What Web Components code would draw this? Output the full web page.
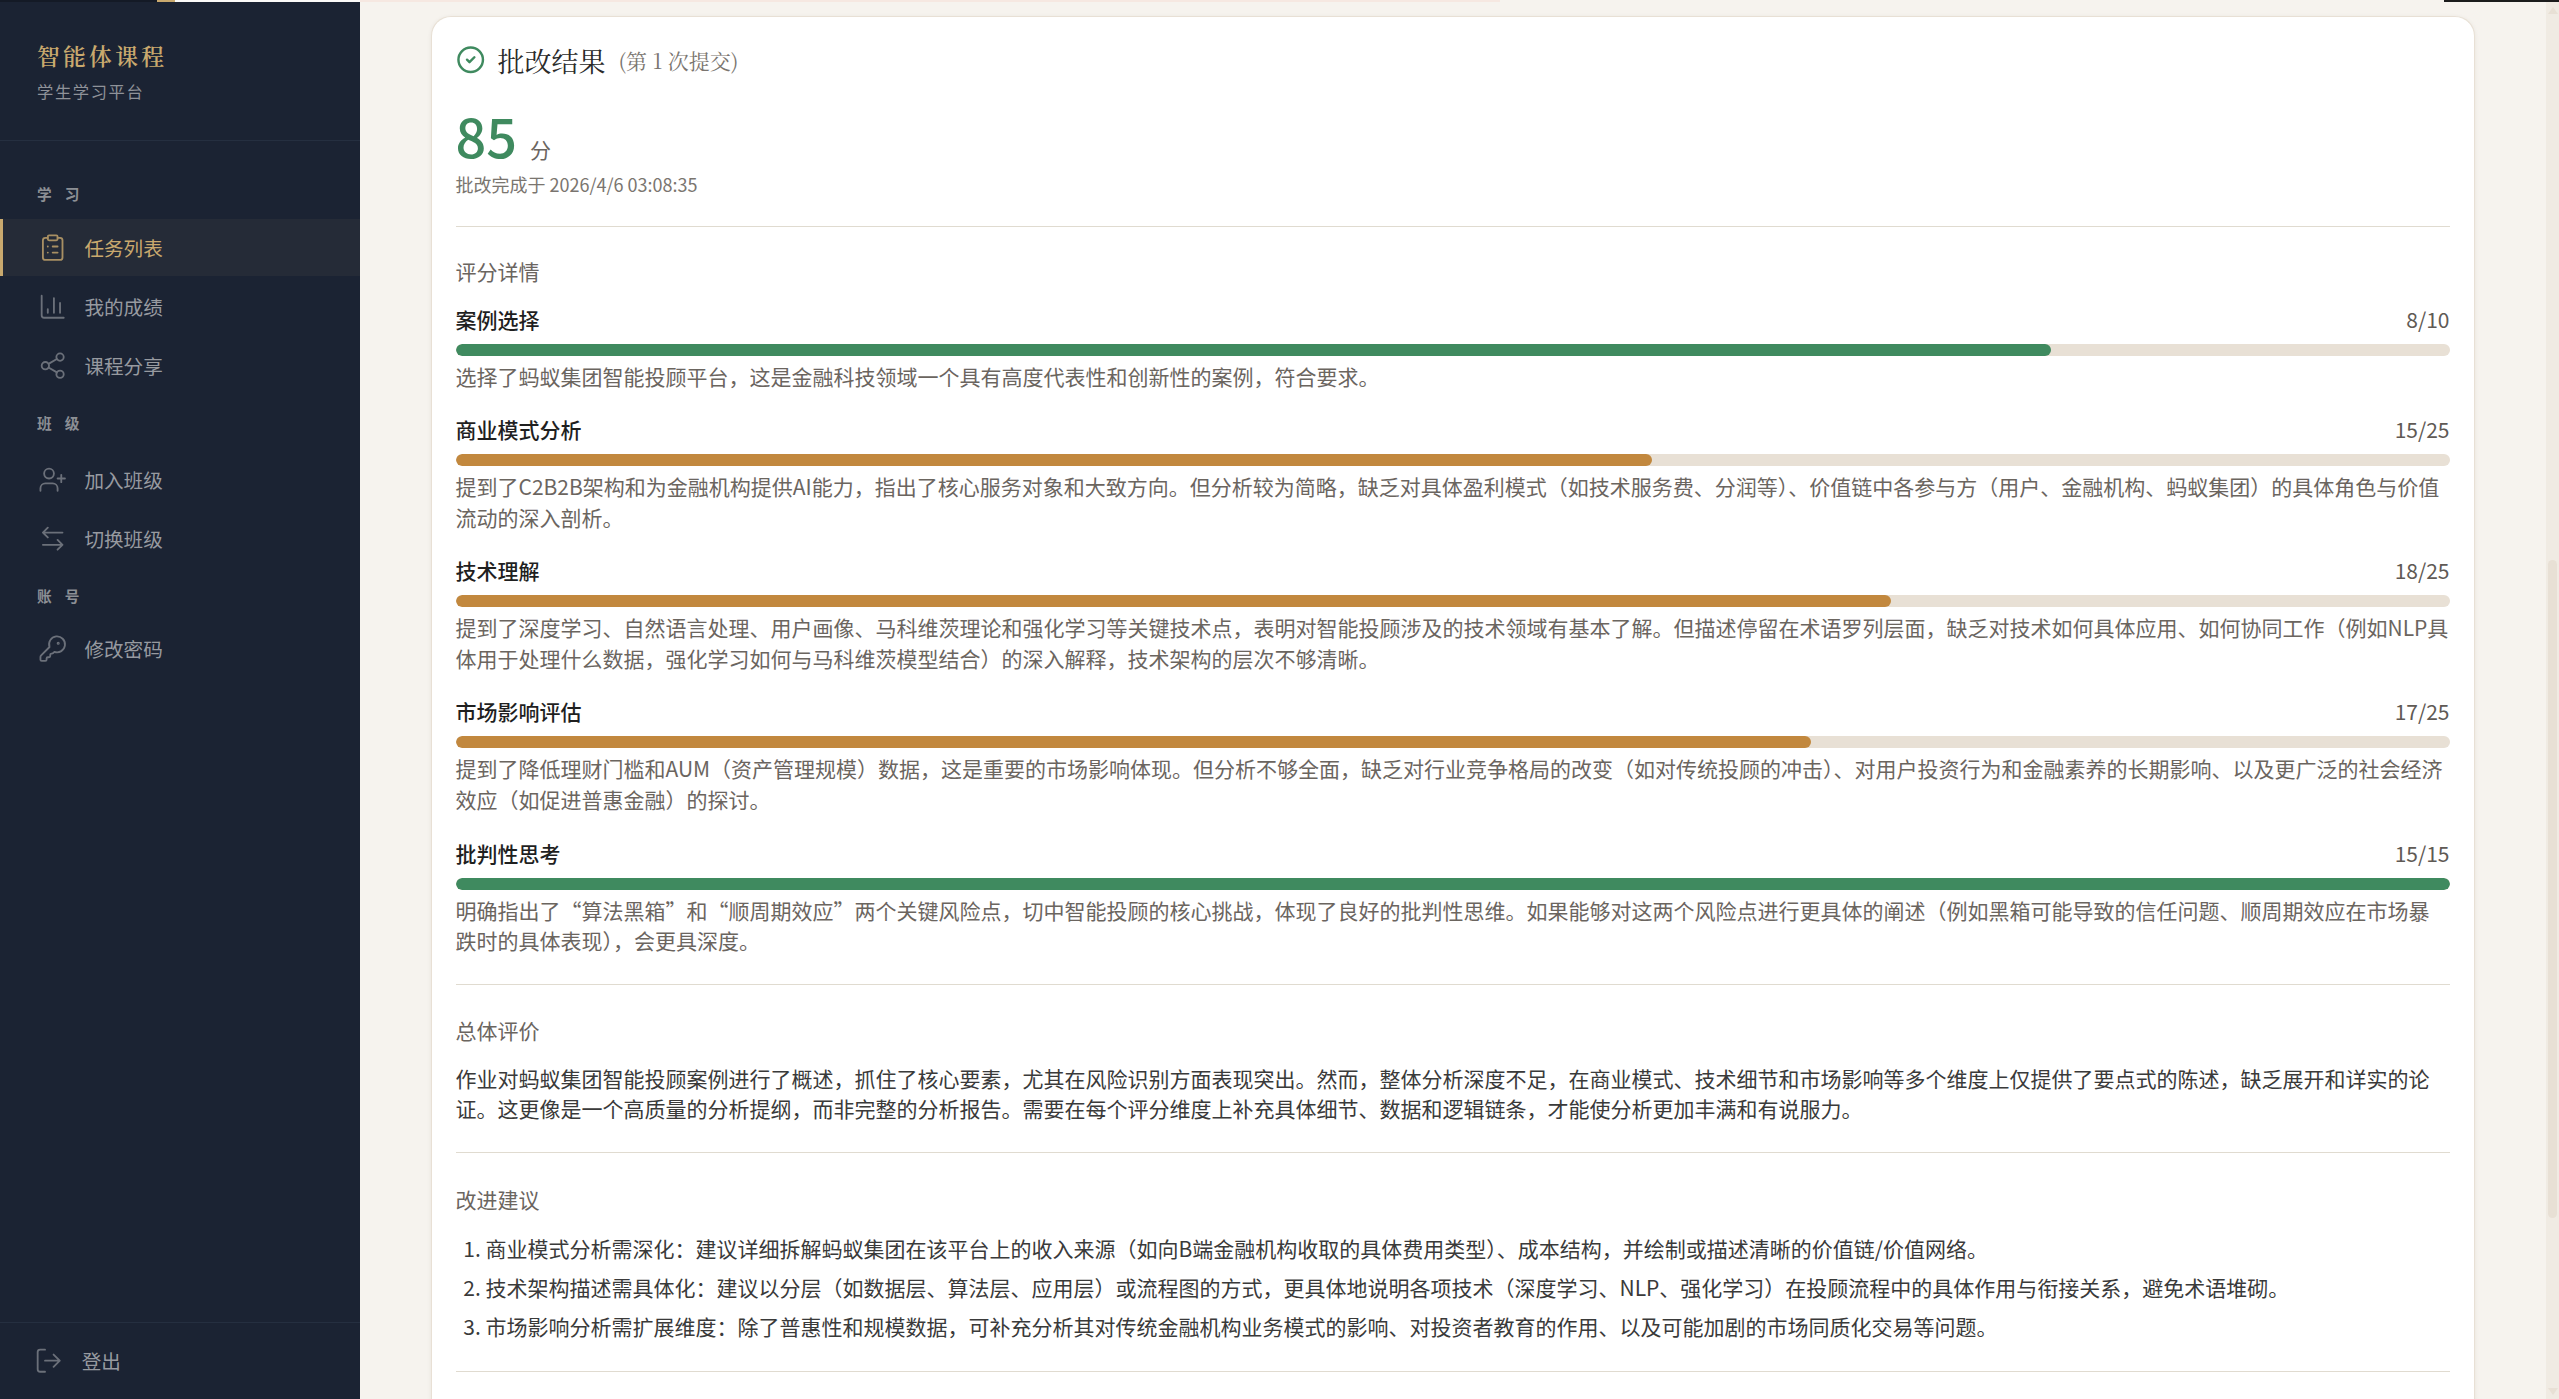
<!doctype html>
<html><head><meta charset="utf-8"><style>
html,body{margin:0;height:100%;overflow:hidden;background:#f6f3ee}
body{font-family:"Noto Sans CJK SC","Noto Sans",sans-serif}
</style></head><body>
<app-shell>
<side-bar slot="side"></side-bar>
<result-card slot="main"></result-card>
</app-shell>
<script>
const SANS='"Noto Sans CJK SC","Noto Sans",sans-serif';
const ICONS={
 task:'<rect x="8" y="2" width="8" height="4" rx="1"/><path d="M16 4h2a2 2 0 0 1 2 2v14a2 2 0 0 1-2 2H6a2 2 0 0 1-2-2V6a2 2 0 0 1 2-2h2"/><path d="M12 11h4M12 16h4M8 11h.01M8 16h.01"/>',
 chart:'<path d="M3 3v16a2 2 0 0 0 2 2h16"/><path d="M18 17V9M13 17V5M8 17v-3"/>',
 share:'<circle cx="18" cy="5" r="3"/><circle cx="6" cy="12" r="3"/><circle cx="18" cy="19" r="3"/><path d="M8.590 13.510l6.830 3.980M15.410 6.510l-6.820 3.980"/>',
 user:'<path d="M16 21v-2a4 4 0 0 0-4-4H6a4 4 0 0 0-4 4v2"/><circle cx="9" cy="7" r="4"/><path d="M19 8v6M22 11h-6"/>',
 swap:'<path d="M8 3L4 7l4 4M4 7h16M16 21l4-4-4-4M20 17H4"/>',
 key:'<path d="M2.586 17.414A2 2 0 0 0 2 18.828V21a1 1 0 0 0 1 1h3a1 1 0 0 0 1-1v-1a1 1 0 0 1 1-1h1a1 1 0 0 0 1-1v-1a1 1 0 0 1 1-1h.172a2 2 0 0 0 1.414-.586l.814-.814a6.500 6.500 0 1 0-4-4z"/><circle cx="16.500" cy="7.500" r=".5"/>',
 out:'<path d="M16 17l5-5-5-5M21 12H9M9 21H5a2 2 0 0 1-2-2V5a2 2 0 0 1 2-2h4"/>'
};
customElements.define('app-shell',class extends HTMLElement{constructor(){super();this.attachShadow({mode:'open'}).innerHTML=`<style>
:host{display:flex;flex-direction:column;height:1399px;width:2559px;overflow:hidden}
.strip{height:2px;flex:none;background:linear-gradient(90deg,#141a26 0 157px,#c9a96e 157px 175px,#fbfaf8 175px 360px,#f6e8e1 360px 1500px,#f6f3ee 1500px 2444px,#1c1c1c 2444px 2559px)}
.row{flex:1;display:flex;min-height:0}
.side{flex:none;width:360px;display:flex}
.main{flex:1;min-width:0;padding:14px 71.500px 0 70.500px;overflow:hidden;background:#f6f3ee}
.bar{flex:none;width:13px;background:#f0ebe3;display:flex;flex-direction:column;align-items:center;position:relative}
.up,.dn{width:0;height:0;border-left:5px solid transparent;border-right:5px solid transparent}
.up{border-bottom:7px solid #e8e0d5;margin-top:5px}
.dn{border-top:7px solid #e8e0d5;position:absolute;bottom:4px}
.th{width:9px;background:#e8e0d5;border-radius:5px;height:658px;margin-top:546px}
</style><div class="strip"></div><div class="row"><div class="side"><slot name="side"></slot></div><div class="main"><slot name="main"></slot></div><div class="bar"><div class="up"></div><div class="th"></div><div class="dn"></div></div></div>`}});
customElements.define('nav-ico',class extends HTMLElement{connectedCallback(){const n=this.getAttribute('name');this.attachShadow({mode:'open'}).innerHTML=`<style>:host{display:flex;flex:none;width:29.400px;height:29.400px}svg{width:100%;height:100%;fill:none;stroke:currentColor;stroke-width:1.500;stroke-linecap:round;stroke-linejoin:round}</style><svg viewBox="0 0 24 24">${ICONS[n]}</svg>`}});
customElements.define('nav-item',class extends HTMLElement{connectedCallback(){const a=this.hasAttribute('active');this.attachShadow({mode:'open'}).innerHTML=`<style>
:host{display:flex;align-items:center;height:57px;margin-bottom:2px;box-sizing:border-box;padding-left:37.500px;gap:17.500px;font:400 19.600px/1 ${SANS};color:#979aa0;${a?'background:#252b37;border-left:3px solid #c9a96e;padding-left:34.500px;color:#c9a96e;':''}}
nav-ico{opacity:${a?'.8':'.65'}}
</style><nav-ico name="${this.getAttribute('icon')}"></nav-ico><span><slot></slot></span>`}});
customElements.define('nav-label',class extends HTMLElement{connectedCallback(){this.attachShadow({mode:'open'}).innerHTML=`<style>
:host{display:block;padding:0 0 0 37px;height:20px;font:700 14.700px/20px ${SANS};color:#8c8f95;letter-spacing:4.900px;white-space:nowrap}
</style><slot></slot>`}});
customElements.define('side-bar',class extends HTMLElement{constructor(){super();this.attachShadow({mode:'open'}).innerHTML=`<style>
:host{display:flex;flex-direction:column;width:360px;height:100%;background:#1b2333;color:#8f9299}
header{height:139px;box-sizing:border-box;padding:39px 0 0 37px;border-bottom:1px solid #252f40}
h1{margin:0;font:600 22.800px/30px "Noto Serif CJK SC",serif;color:#c9a96e;letter-spacing:3.260px}
p{margin:9px 0 0;font:400 16.300px/22px ${SANS};letter-spacing:1.600px;color:#8f9299}
nav{flex:1;padding-top:43px}
footer{height:77.500px;border-top:1px solid #252f40;box-sizing:border-box;padding-left:34.300px;display:flex;align-items:center;gap:18px;font:400 19.600px/1 ${SANS};color:#979aa0}
footer nav-ico{opacity:.65}
.a{margin-bottom:15px}.b{margin:19px 0 18px}.c{margin:19px 0 14.500px}
</style><header><h1>智能体课程</h1><p>学生学习平台</p></header>
<nav><nav-label class="a">学 习</nav-label>
<nav-item active icon="task">任务列表</nav-item><nav-item icon="chart">我的成绩</nav-item><nav-item icon="share">课程分享</nav-item>
<nav-label class="b">班 级</nav-label>
<nav-item icon="user">加入班级</nav-item><nav-item icon="swap">切换班级</nav-item>
<nav-label class="c">账 号</nav-label>
<nav-item icon="key">修改密码</nav-item></nav>
<footer><nav-ico name="out"></nav-ico><span>登出</span></footer>`}});
customElements.define('score-item',class extends HTMLElement{connectedCallback(){const s=+this.getAttribute('s'),m=+this.getAttribute('m'),p=s/m*100;const c=p>=80?'#3f8a5f':'#c2883e';this.attachShadow({mode:'open'}).innerHTML=`<style>
:host{display:block;margin-bottom:23px}
.h{display:flex;justify-content:space-between;height:30px;line-height:30px;margin-bottom:10px;font-size:21px}
.n{font-weight:500;color:#1f1f1f}.v{color:#5f5a55}
.t{height:12px;border-radius:6px;background:#e8e0d5;overflow:hidden}
.f{height:100%;border-radius:6px;background:${c};width:${p}%}
.d{margin:5px 0 0;font-size:21px;line-height:30.600px;color:#6b655f}
</style><div class="h"><span class="n">${this.getAttribute('name')}</span><span class="v">${s}/${m}</span></div><div class="t"><div class="f"></div></div><p class="d"><slot></slot></p>`}});
customElements.define('result-card',class extends HTMLElement{constructor(){super();const items=[
['案例选择',8,10,'选择了蚂蚁集团智能投顾平台，这是金融科技领域一个具有高度代表性和创新性的案例，符合要求。'],
['商业模式分析',15,25,'提到了C2B2B架构和为金融机构提供AI能力，指出了核心服务对象和大致方向。但分析较为简略，缺乏对具体盈利模式（如技术服务费、分润等）、价值链中各参与方（用户、金融机构、蚂蚁集团）的具体角色与价值流动的深入剖析。'],
['技术理解',18,25,'提到了深度学习、自然语言处理、用户画像、马科维茨理论和强化学习等关键技术点，表明对智能投顾涉及的技术领域有基本了解。但描述停留在术语罗列层面，缺乏对技术如何具体应用、如何协同工作（例如NLP具体用于处理什么数据，强化学习如何与马科维茨模型结合）的深入解释，技术架构的层次不够清晰。'],
['市场影响评估',17,25,'提到了降低理财门槛和AUM（资产管理规模）数据，这是重要的市场影响体现。但分析不够全面，缺乏对行业竞争格局的改变（如对传统投顾的冲击）、对用户投资行为和金融素养的长期影响、以及更广泛的社会经济效应（如促进普惠金融）的探讨。'],
['批判性思考',15,15,'明确指出了“算法黑箱”和“顺周期效应”两个关键风险点，切中智能投顾的核心挑战，体现了良好的批判性思维。如果能够对这两个风险点进行更具体的阐述（例如黑箱可能导致的信任问题、顺周期效应在市场暴跌时的具体表现），会更具深度。']];
this.attachShadow({mode:'open'}).innerHTML=`<style>
:host{display:block;background:#fff;border:1px solid #e8e0d5;border-bottom:0;border-radius:20px 20px 0 0;box-shadow:0 1px 4px rgba(60,50,30,.08);padding:24px 24px 0 24px;height:1500px;box-sizing:border-box}
.tt{display:flex;align-items:center;height:38px;color:#2a2a2a}
.tt svg{width:29.400px;height:29.400px;fill:none;stroke:#3f8a5f;stroke-width:2;stroke-linecap:round;stroke-linejoin:round;margin-right:12.500px}
.tt b{font:400 27px/1 "Noto Serif CJK SC",serif;color:#2a2a2a}
.tt i{font:400 21px/1 "Noto Serif CJK SC",serif;color:#7a756f;margin-left:13px}
.sc{margin-top:26px;display:flex;align-items:baseline;height:60px;color:#3f8a5f;font-size:54px;font-weight:500;line-height:60px}
.sc u{text-decoration:none;font-size:21px;font-weight:400;color:#6b655f;margin-left:13px}
.tm{font-size:18px;color:#7a756f;line-height:30px;margin-top:4px}
hr{border:0;border-top:1px solid #e0dbd0;margin:0}
h3{margin:0;font:400 21px/30px ${SANS};color:#6b655f}
.ov{font-size:21px;line-height:30px;color:#3a3a3a;margin:18px 0 0}
ol{margin:15px 0 0;padding:0 0 0 30px;font-size:21px;line-height:39px;color:#3a3a3a}
</style>
<div class="tt"><svg viewBox="0 0 24 24"><circle cx="12" cy="12" r="10"/><path d="M9 12l2 2 4-4"/></svg><b>批改结果</b><i>(第 1 次提交)</i></div>
<div class="sc">85<u>分</u></div>
<div class="tm">批改完成于 2026/4/6 03:08:35</div>
<hr style="margin-top:27px">
<h3 style="margin-top:29px;margin-bottom:17.500px">评分详情</h3>
${items.map(i=>`<score-item name="${i[0]}" s="${i[1]}" m="${i[2]}">${i[3]}</score-item>`).join('')}
<hr style="margin-top:28px">
<h3 style="margin-top:30px">总体评价</h3>
<p class="ov">作业对蚂蚁集团智能投顾案例进行了概述，抓住了核心要素，尤其在风险识别方面表现突出。然而，整体分析深度不足，在商业模式、技术细节和市场影响等多个维度上仅提供了要点式的陈述，缺乏展开和详实的论证。这更像是一个高质量的分析提纲，而非完整的分析报告。需要在每个评分维度上补充具体细节、数据和逻辑链条，才能使分析更加丰满和有说服力。</p>
<hr style="margin-top:29px">
<h3 style="margin-top:31px">改进建议</h3>
<ol><li>商业模式分析需深化：建议详细拆解蚂蚁集团在该平台上的收入来源（如向B端金融机构收取的具体费用类型）、成本结构，并绘制或描述清晰的价值链/价值网络。</li>
<li>技术架构描述需具体化：建议以分层（如数据层、算法层、应用层）或流程图的方式，更具体地说明各项技术（深度学习、NLP、强化学习）在投顾流程中的具体作用与衔接关系，避免术语堆砌。</li>
<li>市场影响分析需扩展维度：除了普惠性和规模数据，可补充分析其对传统金融机构业务模式的影响、对投资者教育的作用、以及可能加剧的市场同质化交易等问题。</li></ol>
<hr style="margin-top:25px">`}});
</script></body></html>
